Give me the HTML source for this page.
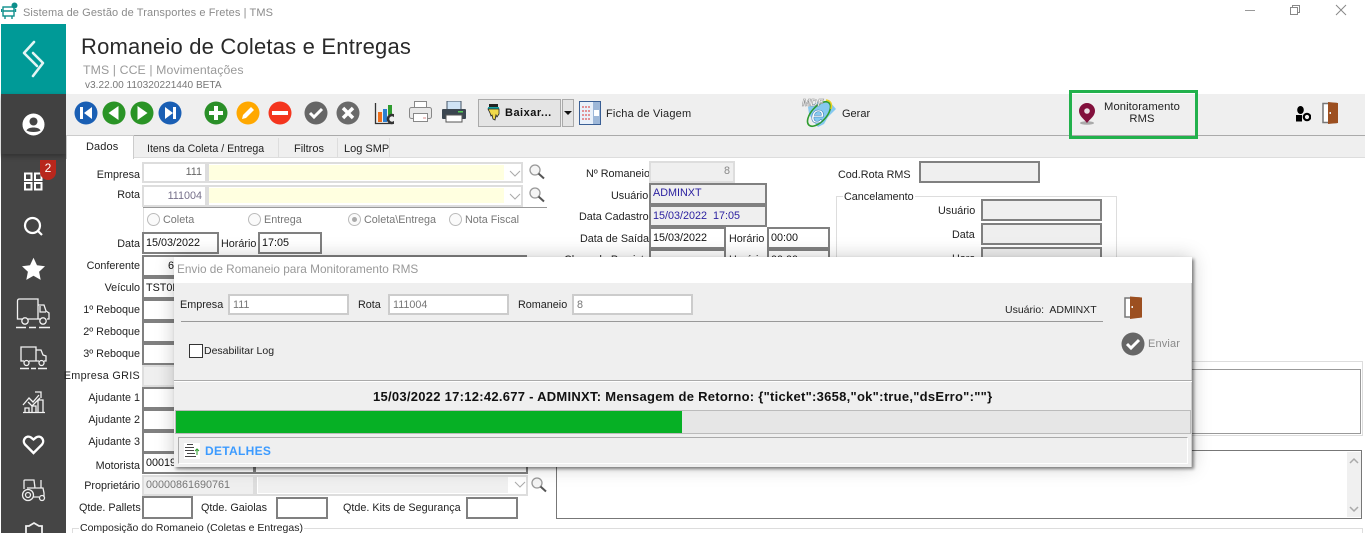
<!DOCTYPE html>
<html><head><meta charset="utf-8">
<style>
html,body{margin:0;padding:0;background:#fff;width:1365px;height:533px;overflow:hidden}
body{position:relative;font-family:"Liberation Sans",sans-serif;font-size:10.8px;color:#222}
div,span,svg{position:absolute;box-sizing:border-box}
.t{white-space:nowrap;line-height:14px;margin-top:1px}
.n{margin-top:0}
.l{white-space:nowrap;line-height:14px;text-align:right;left:0;width:140px;margin-top:1px}
.f{background:#fff;border:2px solid #808080;white-space:nowrap;line-height:15px;padding:2px 0 0 2px;color:#111}
.g{background:#fff;border:2px solid #ddd}
.gr{background:#efefef;border:2px solid #ddd}
.r{width:13px;height:13px;border:1px solid #bbb;border-radius:50%;background:#fafafa}
.gt{color:#777}
.mf{background:#fff;border:2px solid #ccc;color:#777;padding:2px 0 0 3px;line-height:14px;white-space:nowrap}
</style></head><body>

<!-- title bar -->
<svg style="left:1px;top:2px" width="18" height="18" viewBox="0 0 18 18" fill="none" stroke="#0d8f8c" stroke-width="1.4"><rect x="2" y="5" width="11" height="9"/><path d="M2 9h11M4 14v3M11 14v3M0.5 7v3M14.500 7v3"/><circle cx="13.500" cy="3.500" r="3" fill="#0d8f8c" stroke="none"/></svg>
<div class="t" style="left:23px;top:5px;font-size:11px;color:#8b8b8b;letter-spacing:.1px">Sistema de Gestão de Transportes e Fretes | TMS</div>
<div style="left:1245px;top:10px;width:10px;height:1px;background:#999"></div>
<svg style="left:1289px;top:4px" width="12" height="12" fill="none" stroke="#888"><rect x="1.500" y="3.500" width="7" height="7"/><path d="M3.500 3.500v-2h7v7h-2"/></svg>
<svg style="left:1335px;top:4px" width="12" height="12" stroke="#888"><path d="M1 1l10 10M11 1L1 11"/></svg>

<!-- sidebar -->
<div style="left:1px;top:24px;width:65px;height:509px;background:#454545"></div>
<div style="left:1px;top:24px;width:65px;height:70px;background:#009a97"></div>
<div style="left:1px;top:94px;width:65px;height:60px;background:#414141;box-shadow:0 2px 5px rgba(0,0,0,.3)"></div>
<svg style="left:22px;top:39px" width="24" height="40" viewBox="0 0 24 40" fill="none" stroke="#e4f5f4" stroke-width="2.600" stroke-linejoin="round" stroke-linecap="round"><path d="M12 3L2 14l13 13"/><path d="M11 14l10 10-10 13"/></svg>
<svg style="left:22px;top:113px" width="23" height="23" viewBox="0 0 23 23"><circle cx="11.500" cy="11.500" r="11" fill="#fff"/><circle cx="11.500" cy="8.500" r="4" fill="#444"/><path d="M4.500 17.500c1.500-4 12.500-4 14 0c-3 2-11 2-14 0z" fill="#444"/></svg>
<svg style="left:23px;top:172px" width="21" height="20" fill="#454545" stroke="#fff" stroke-width="2"><rect x="2" y="1.500" width="6.500" height="6.500"/><rect x="12" y="1.500" width="6.500" height="6.500"/><rect x="2" y="11" width="6.500" height="6.500"/><rect x="12" y="11" width="6.500" height="6.500"/></svg>
<div style="left:40px;top:160px;width:16px;height:20px;border-radius:0 0 8px 8px;background:#b8271c;color:#fff;text-align:center;font-size:12px;line-height:17px">2</div>
<svg style="left:23px;top:216px" width="21" height="21" fill="none" stroke="#fff" stroke-width="2.200"><circle cx="9.500" cy="9.500" r="7.500"/><path d="M15 15l4 4"/></svg>
<svg style="left:21px;top:257px" width="25" height="24" viewBox="0 0 24 24" fill="#fff"><path d="M12 .8l3.500 7.500 8 1-5.900 5.500 1.600 8.100L12 18.800l-7.200 4.100 1.600-8.100L.5 9.300l8-1z"/></svg>
<svg style="left:15px;top:298px" width="37" height="31" fill="none" stroke="#f2f2f2" stroke-width="1.300"><path d="M7 21H2.500V3q0-2 2-2H23v20H13M23 7h6l2 6 3 2v6h-2M23 21h2"/><path d="M25 8v6h6" /><circle cx="10" cy="23" r="3.200"/><circle cx="28" cy="23" r="3.200"/><path d="M1 29.500h10M14 29.500h7M24 29.500h11" stroke-width="1.500"/></svg>
<svg style="left:19px;top:345px" width="30" height="25" fill="none" stroke="#f2f2f2" stroke-width="1.300"><path d="M5 16H2V2h15v14H10M17 5h5l2 5 3 1v5h-2M17 16h3"/><circle cx="7.500" cy="18" r="2.500"/><circle cx="22.500" cy="18" r="2.500"/><path d="M1 23.500h9M12 23.500h5M19 23.500h9" stroke-width="1.500"/></svg>
<svg style="left:22px;top:390px" width="23" height="24" fill="none" stroke="#f2f2f2" stroke-width="1.300"><path d="M1 15l6-7 4 4 6-7M13 2h6v6M6 12l4 4 8-8"/><path d="M3 22v-4h4v4M10 22v-6h4v6M16 22V10h5v12M1 22.500h22"/></svg>
<svg style="left:22px;top:435px" width="23" height="20" viewBox="0 0 23 20" fill="none" stroke="#fff" stroke-width="2.400"><path d="M11.500 18L3 9.500C-.5 5 4.500-.5 9 2.500l2.500 2 2.500-2c4.500-3 9.500 2.500 6 7z"/></svg>
<svg style="left:21px;top:478px" width="26" height="24" fill="none" stroke="#eee" stroke-width="1.300"><circle cx="7" cy="17" r="5.500"/><circle cx="7" cy="17" r="2.500"/><circle cx="21" cy="20" r="2.500"/><path d="M3 11V3q0-1 1-1h9l1 8h8l1 5v4M12 19h6M14 10h-8M20 10V2"/></svg>
<svg style="left:24px;top:521px" width="20" height="14" fill="none" stroke="#eee" stroke-width="1.800"><path d="M2 14V5h3l5-3 5 3h3v9"/></svg>

<!-- header -->
<div class="t n" style="left:81px;top:33px;font-size:22px;line-height:28px;color:#2a2a2a;letter-spacing:.2px">Romaneio de Coletas e Entregas</div>
<div class="t n" style="left:83px;top:63px;font-size:12.300px;color:#9a9a9a;letter-spacing:.1px">TMS | CCE | Movimentações</div>
<div class="t n" style="left:85px;top:79px;font-size:10.100px;color:#777">v3.22.00 110320221440 BETA</div>

<!-- toolbar -->
<div style="left:66px;top:94px;width:1299px;height:42px;background:#efefef;border-bottom:1px solid #aaa"></div>
<div style="left:66px;top:136px;width:1299px;height:22px;background:#efefef;border-bottom:1px solid #ddd"></div>

<svg style="left:74px;top:101px" width="320" height="24" viewBox="74 101 320 24">
<circle cx="86" cy="113" r="11.500" fill="#1a5fb4"/><path d="M80 107h3v12h-3zM92 107v12l-8-6z" fill="#fff"/>
<circle cx="114" cy="113" r="11.500" fill="#2a9426"/><path d="M118.500 106v14l-10-7z" fill="#fff"/>
<circle cx="142" cy="113" r="11.500" fill="#2a9426"/><path d="M137.500 106v14l10-7z" fill="#fff"/>
<circle cx="170" cy="113" r="11.500" fill="#1a5fb4"/><path d="M165 107v12l8-6zM173 107h3v12h-3z" fill="#fff"/>
<circle cx="216" cy="113" r="11.500" fill="#2a8f28"/><path d="M214 106h4v5h5v4h-5v5h-4v-5h-5v-4h5z" fill="#fff"/>
<circle cx="248" cy="113" r="11.500" fill="#ffa800"/><path d="M242 119l1-4 8-8 3 3-8 8z" fill="#fff"/>
<circle cx="280" cy="113" r="11.500" fill="#f4351e"/><rect x="272" y="111" width="16" height="4" fill="#fff"/>
<circle cx="316" cy="113" r="11.500" fill="#666"/><path d="M310 113l4 4 8-8" fill="none" stroke="#fff" stroke-width="3"/>
<circle cx="348" cy="113" r="11.500" fill="#6a6a6a"/><path d="M343 108l10 10M353 108l-10 10" fill="none" stroke="#fff" stroke-width="3.500"/>
<path d="M375.500 103v20.500H392" fill="none" stroke="#333" stroke-width="1.300"/><rect x="378" y="112" width="4" height="10" fill="#f0701c"/><rect x="383" y="109" width="4" height="13" fill="#2c7fd0"/><rect x="388" y="105" width="4" height="10" fill="#2f9c2f"/><circle cx="392" cy="119" r="4" fill="none" stroke="#333" stroke-width="2.600"/>
</svg>
<svg style="left:409px;top:101px" width="23" height="22" fill="none" stroke="#888"><rect x="5.500" y=".5" width="12" height="6" fill="#fff"/><rect x=".5" y="6.500" width="22" height="11" rx="2" fill="#e8e8e8"/><rect x="4.500" y="12.500" width="14" height="8" fill="#fff"/><path d="M14 17h3" stroke="#d88"/></svg>
<svg style="left:442px;top:101px" width="24" height="22"><rect x="5" y="0" width="14" height="9" fill="#cfe3f5" stroke="#456" /><rect x="0" y="8" width="24" height="10" rx="1" fill="#3b4650"/><rect x="4" y="14" width="16" height="7" fill="#fff" stroke="#555"/><rect x="16" y="10" width="5" height="1.500" fill="#5c5"/></svg>

<div style="left:478px;top:99px;width:83px;height:28px;background:#e4e4e4;border:1px solid #aaa"></div>
<svg style="left:487px;top:104px" width="13" height="18"><rect x="2" y="0" width="9" height="3" fill="#222"/><rect x="1" y="3" width="11" height="2" fill="#16a3a3"/><path d="M1 5h11v5l-2 3-1-2-1 5-2-1-1-4-1 1-1-3z" fill="#f1d94a" stroke="#222" stroke-width=".8"/></svg>
<div class="t n" style="left:505px;top:106px;font-weight:bold;color:#111;letter-spacing:.5px;font-size:11px">Baixar...</div>
<div style="left:562px;top:99px;width:12px;height:28px;background:#e4e4e4;border:1px solid #aaa"></div>
<div style="left:564px;top:111px;border:4px solid transparent;border-top:4px solid #111;border-left-width:4px;border-right-width:4px"></div>
<svg style="left:579px;top:101px" width="22" height="24"><rect x=".5" y=".5" width="21" height="23" fill="#e8f0fa" stroke="#3a5f95"/><rect x="14" y="1" width="7" height="22" fill="#9db7d8"/><path d="M3 6h8M3 10h8M3 14h8M3 18h8" stroke="#d33" stroke-dasharray="2 1"/><rect x="15" y="9" width="5" height="6" fill="#fff"/></svg>
<div class="t" style="left:606px;top:106px;color:#222;font-size:11px;letter-spacing:.2px">Ficha de Viagem</div>
<svg style="left:801px;top:97px" width="37" height="31" viewBox="0 0 37 31"><path d="M7 10l10-5 12 0 6 7-8 8-4 7-6 3-4-5-5-8z" fill="#86c9f0"/><ellipse cx="18" cy="17" rx="15" ry="7.500" fill="none" stroke="#2f9c2f" stroke-width="1.600" transform="rotate(-48 18 17)"/><path d="M25 3q7 1 5 9" fill="none" stroke="#e8d11f" stroke-width="1.500"/><text x="10" y="26" font-family="Liberation Sans" font-size="24" font-style="italic" fill="#fff" stroke="#3a78b0" stroke-width=".5">e</text><text x="1" y="9" font-family="Liberation Sans" font-size="10" font-weight="bold" font-style="italic" fill="#fff" stroke="#888" stroke-width=".5">MDF</text></svg>
<div class="t" style="left:842px;top:106px;color:#222;font-size:11px">Gerar</div>

<div style="left:1069px;top:90px;width:129px;height:49px;border:3px solid #22b14c"></div>
<svg style="left:1078px;top:102px" width="18" height="23"><ellipse cx="9" cy="21" rx="7" ry="1.800" fill="#aaa"/><path d="M9 1a8 8 0 0 1 8 8c0 5-5 8-8 12c-3-4-8-7-8-12a8 8 0 0 1 8-8z" fill="#82103c"/><circle cx="9" cy="9" r="2.800" fill="#e9dde2"/></svg>
<div class="t n" style="left:1092px;top:101px;width:100px;text-align:center;line-height:12px;font-size:11.200px;color:#222;letter-spacing:.1px">Monitoramento<br>RMS</div>
<svg style="left:1296px;top:105px" width="15" height="18" fill="#000"><ellipse cx="4.500" cy="5" rx="3.300" ry="4"/><rect x="0" y="10" width="6" height="6.500"/><circle cx="11" cy="12" r="3.200" fill="none" stroke="#000" stroke-width="2.200"/></svg>
<svg style="left:1322px;top:101px" width="17" height="24"><rect x="1" y="2.500" width="13" height="19" fill="#fff" stroke="#777" stroke-width="1.500"/><path d="M6 1l10 1v20l-10 1z" fill="#9c4f20"/><rect x="7.500" y="11" width="1.500" height="2" fill="#eee"/></svg>

<!-- tabs -->
<div style="left:66px;top:135px;width:68px;height:24px;background:#fff;border:1px solid #ccc;border-bottom:0"></div>
<div class="t" style="left:86px;top:139px;font-size:11px;letter-spacing:.1px">Dados</div>
<div style="left:134px;top:138px;width:145px;height:20px;border-right:1px solid #ddd"></div>
<div class="t" style="left:147px;top:141px;font-size:10.600px">Itens da Coleta / Entrega</div>
<div style="left:279px;top:138px;width:59px;height:20px;border-right:1px solid #ddd"></div>
<div class="t" style="left:294px;top:141px;font-size:11px">Filtros</div>
<div style="left:338px;top:138px;width:52px;height:20px;border-right:1px solid #ddd"></div>
<div class="t" style="left:344px;top:141px;font-size:11px">Log SMP</div>

<!-- left form -->
<div class="l" style="top:167px">Empresa</div>
<div class="g" style="left:142px;top:162px;width:65px;height:21px;text-align:right;padding:0 3px;line-height:17px;color:#666">111</div>
<div class="g" style="left:207px;top:162px;width:316px;height:21px"></div>
<div style="left:209px;top:165px;width:295px;height:15px;background:#ffffe0"></div>
<div class="l" style="top:187px">Rota</div>
<div class="g" style="left:142px;top:185px;width:65px;height:22px;text-align:right;padding:1px 3px;line-height:17px;color:#76708a">111004</div>
<div class="g" style="left:207px;top:185px;width:316px;height:22px"></div>
<div style="left:209px;top:188px;width:295px;height:15px;background:#ffffe0"></div>
<svg style="left:509px;top:168px" width="14" height="34" fill="none" stroke="#aaa"><path d="M1 3l5 5 5-5M1 26l5 5 5-5"/></svg>
<svg style="left:528px;top:163px" width="18" height="46" fill="none"><circle cx="7" cy="7" r="5" fill="#f5f5f5" stroke="#999" stroke-width="1.300"/><path d="M10.500 10.500l5.500 5" stroke="#555" stroke-width="2"/><circle cx="7" cy="30" r="5" fill="#f5f5f5" stroke="#999" stroke-width="1.300"/><path d="M10.500 33.500l5.500 5" stroke="#555" stroke-width="2"/></svg>
<div style="left:143px;top:207px;width:404px;height:1px;background:#999"></div>
<div style="left:143px;top:208px;width:1px;height:24px;background:#ddd"></div>
<div class="r" style="left:147px;top:213px"></div><div class="t gt" style="left:163px;top:212px">Coleta</div>
<div class="r" style="left:248px;top:213px"></div><div class="t gt" style="left:264px;top:212px">Entrega</div>
<div class="r" style="left:348px;top:213px"></div><div style="left:352px;top:217px;width:5px;height:5px;border-radius:50%;background:#aaa"></div><div class="t gt" style="left:364px;top:212px">Coleta\Entrega</div>
<div class="r" style="left:449px;top:213px"></div><div class="t gt" style="left:465px;top:212px">Nota Fiscal</div>

<div class="l" style="top:236px">Data</div>
<div class="f" style="left:142px;top:232px;width:77px;height:22px">15/03/2022</div>
<div class="t" style="left:221px;top:236px">Horário</div>
<div class="f" style="left:258px;top:232px;width:64px;height:22px">17:05</div>

<div class="l" style="top:258px">Conferente</div>
<div class="f" style="left:142px;top:255px;width:66px;height:22px;padding-left:24px">6</div>
<div class="f" style="left:207px;top:255px;width:320px;height:22px"></div>
<div class="l" style="top:280px">Veículo</div>
<div class="f" style="left:142px;top:277px;width:385px;height:22px">TST0E</div>
<div class="l" style="top:302px">1º Reboque</div>
<div class="f" style="left:142px;top:299px;width:385px;height:22px"></div>
<div class="l" style="top:324px">2º Reboque</div>
<div class="f" style="left:142px;top:321px;width:385px;height:22px"></div>
<div class="l" style="top:346px">3º Reboque</div>
<div class="f" style="left:142px;top:343px;width:385px;height:22px"></div>
<div class="l" style="top:368px;letter-spacing:.3px">Empresa GRIS</div>
<div class="gr" style="left:142px;top:365px;width:385px;height:22px"></div>
<div class="l" style="top:390px">Ajudante 1</div>
<div class="f" style="left:142px;top:387px;width:385px;height:22px"></div>
<div class="l" style="top:412px">Ajudante 2</div>
<div class="f" style="left:142px;top:409px;width:385px;height:22px"></div>
<div class="l" style="top:434px">Ajudante 3</div>
<div class="f" style="left:142px;top:431px;width:385px;height:22px"></div>
<div class="l" style="top:458px">Motorista</div>
<div class="f" style="left:142px;top:452px;width:113px;height:22px">00019</div>
<div class="f" style="left:254px;top:452px;width:274px;height:22px"></div>
<div class="l" style="top:478px">Proprietário</div>
<div class="gr" style="left:142px;top:475px;width:113px;height:21px;color:#777;padding-left:2px;line-height:16px">00000861690761</div>
<div class="g" style="left:255px;top:475px;width:273px;height:21px"></div>
<div style="left:258px;top:477px;width:250px;height:16px;background:#f0f0f0"></div>
<svg style="left:514px;top:481px" width="12" height="8" fill="none" stroke="#aaa"><path d="M1 1l5 5 5-5"/></svg>
<svg style="left:530px;top:476px" width="18" height="18" fill="none"><circle cx="7" cy="7" r="5" fill="#f5f5f5" stroke="#999" stroke-width="1.300"/><path d="M10.500 10.500l5.500 5" stroke="#555" stroke-width="2"/></svg>
<div class="t n" style="left:79px;top:501px">Qtde. Pallets</div>
<div class="f" style="left:142px;top:496px;width:51px;height:23px"></div>
<div class="t n" style="left:201px;top:501px">Qtde. Gaiolas</div>
<div class="f" style="left:276px;top:497px;width:52px;height:22px"></div>
<div class="t n" style="left:343px;top:501px">Qtde. Kits de Segurança</div>
<div class="f" style="left:466px;top:497px;width:52px;height:22px"></div>
<div style="left:72px;top:528px;width:1291px;height:5px;border:1px solid #ddd;border-bottom:0"></div>
<div class="t n" style="left:79px;top:521px;background:#fff;padding:0 1px;font-size:10.500px">Composição do Romaneio (Coletas e Entregas)</div>

<!-- middle form -->
<div class="t" style="left:586px;top:166px">Nº Romaneio</div>
<div class="gr" style="left:649px;top:161px;width:86px;height:22px;text-align:right;padding:0 3px;line-height:17px;color:#888">8</div>
<div class="t" style="left:611px;top:188px">Usuário</div>
<div class="f" style="left:649px;top:183px;width:118px;height:22px;background:#efefef;color:#2a1fa0;padding-top:1px">ADMINXT</div>
<div class="t" style="left:579px;top:209px">Data Cadastro</div>
<div class="f" style="left:649px;top:205px;width:118px;height:22px;background:#efefef;color:#2a1fa0">15/03/2022&nbsp; 17:05</div>
<div class="t" style="left:580px;top:231px">Data de Saída</div>
<div class="f" style="left:649px;top:227px;width:77px;height:22px">15/03/2022</div>
<div class="t" style="left:729px;top:231px">Horário</div>
<div class="f" style="left:767px;top:227px;width:63px;height:22px">00:00</div>
<div class="t" style="left:564px;top:252px">Chegada Prevista</div>
<div class="f" style="left:649px;top:249px;width:77px;height:22px"></div>
<div class="t" style="left:729px;top:252px">Horário</div>
<div class="f" style="left:767px;top:249px;width:63px;height:22px">00:00</div>

<!-- right form -->
<div class="t" style="left:838px;top:167px">Cod.Rota RMS</div>
<div class="f" style="left:919px;top:161px;width:121px;height:22px;background:#efefef"></div>
<div style="left:836px;top:196px;width:281px;height:200px;border:1px solid #ddd"></div>
<div class="t" style="left:843px;top:189px;background:#fff;padding:0 1px">Cancelamento</div>
<div class="t" style="left:938px;top:203px">Usuário</div>
<div class="f" style="left:981px;top:199px;width:121px;height:22px;background:#efefef"></div>
<div class="t" style="left:952px;top:227px">Data</div>
<div class="f" style="left:981px;top:223px;width:121px;height:22px;background:#efefef"></div>
<div class="t" style="left:952px;top:251px">Hora</div>
<div class="f" style="left:981px;top:247px;width:121px;height:22px;background:#efefef"></div>

<div style="left:556px;top:361px;width:807px;height:75px;border:1px solid #ddd"></div>
<div style="left:558px;top:369px;width:803px;height:65px;border:1px solid #999"></div>
<div style="left:556px;top:450px;width:806px;height:69px;border:1px solid #777"></div>
<div style="left:1347px;top:452px;width:14px;height:65px;background:#f0f0f0"></div>
<svg style="left:1348px;top:456px" width="12" height="58" fill="none" stroke="#aaa" stroke-width="1.500"><path d="M2 7l4-4 4 4M2 51l4 4 4-4"/></svg>

<!-- modal -->
<div style="left:174px;top:257px;width:1018px;height:210px;background:#efefef;box-shadow:2px 2px 3px rgba(0,0,0,.45),0 0 18px rgba(0,0,0,.22);border-right:1px solid #ccc">
</div>
<div style="left:174px;top:257px;width:1018px;height:26px;background:#fff"></div>
<div class="t n" style="left:177px;top:262px;color:#999;font-size:11.800px">Envio de Romaneio para Monitoramento RMS</div>
<div class="t" style="left:180px;top:297px">Empresa</div>
<div class="mf" style="left:228px;top:294px;width:121px;height:21px">111</div>
<div class="t" style="left:358px;top:297px">Rota</div>
<div class="mf" style="left:388px;top:294px;width:121px;height:21px">111004</div>
<div class="t" style="left:518px;top:297px">Romaneio</div>
<div class="mf" style="left:572px;top:294px;width:121px;height:21px">8</div>
<div style="left:181px;top:321px;width:922px;height:1px;background:#999"></div>
<div class="t n" style="left:1005px;top:303px;font-size:10.500px">Usuário:&nbsp; ADMINXT</div>
<svg style="left:1124px;top:295px" width="19" height="25"><rect x="1" y="3" width="14" height="19" fill="#fff" stroke="#777" stroke-width="1.500"/><path d="M6 1.500l12 1v20l-12 1.500z" fill="#9c4f20"/><rect x="7.500" y="11" width="1.500" height="2" fill="#eee"/></svg>
<svg style="left:1121px;top:332px" width="24" height="24"><circle cx="12" cy="12" r="11.500" fill="#666"/><path d="M6 12l4 4 8-8" fill="none" stroke="#fff" stroke-width="3"/></svg>
<div class="t n" style="left:1148px;top:337px;color:#8a8a8a;font-size:11px;letter-spacing:.15px">Enviar</div>
<div style="left:189px;top:344px;width:14px;height:14px;background:#fff;border:1px solid #333"></div>
<div class="t n" style="left:204px;top:344px;font-size:10.500px">Desabilitar Log</div>
<div style="left:174px;top:380px;width:1018px;height:1px;background:#aaa"></div>
<div style="left:174px;top:381px;width:1018px;height:1px;background:#fff"></div>
<div class="t n" style="left:373px;top:390px;font-weight:bold;font-size:13px;color:#111;letter-spacing:.27px">15/03/2022 17:12:42.677 - ADMINXT: Mensagem de Retorno: {"ticket":3658,"ok":true,"dsErro":""}</div>
<div style="left:175px;top:410px;width:1016px;height:24px;background:#e6e6e6;border:1px solid #bbb"></div>
<div style="left:176px;top:411px;width:506px;height:22px;background:#06b025"></div>
<div style="left:178px;top:437px;width:1010px;height:27px;border:1px solid #fff;border-top:1px solid #aaa;border-left:1px solid #aaa"></div>
<svg style="left:184px;top:443px" width="16" height="16" fill="none" stroke="#444"><rect x="0" y="0" width="16" height="16" fill="#fff" stroke="none"/><path d="M1 4.500h9M1 7.500h9M3 10.500h8M1 13.500h11M3 1.500h6"/><path d="M13 12V6M11 8l2-2 2 2" stroke="#2a9c2a"/></svg>
<div class="t n" style="left:205px;top:444px;font-weight:bold;font-size:12px;color:#3c9bff;letter-spacing:.3px">DETALHES</div>

</body></html>
